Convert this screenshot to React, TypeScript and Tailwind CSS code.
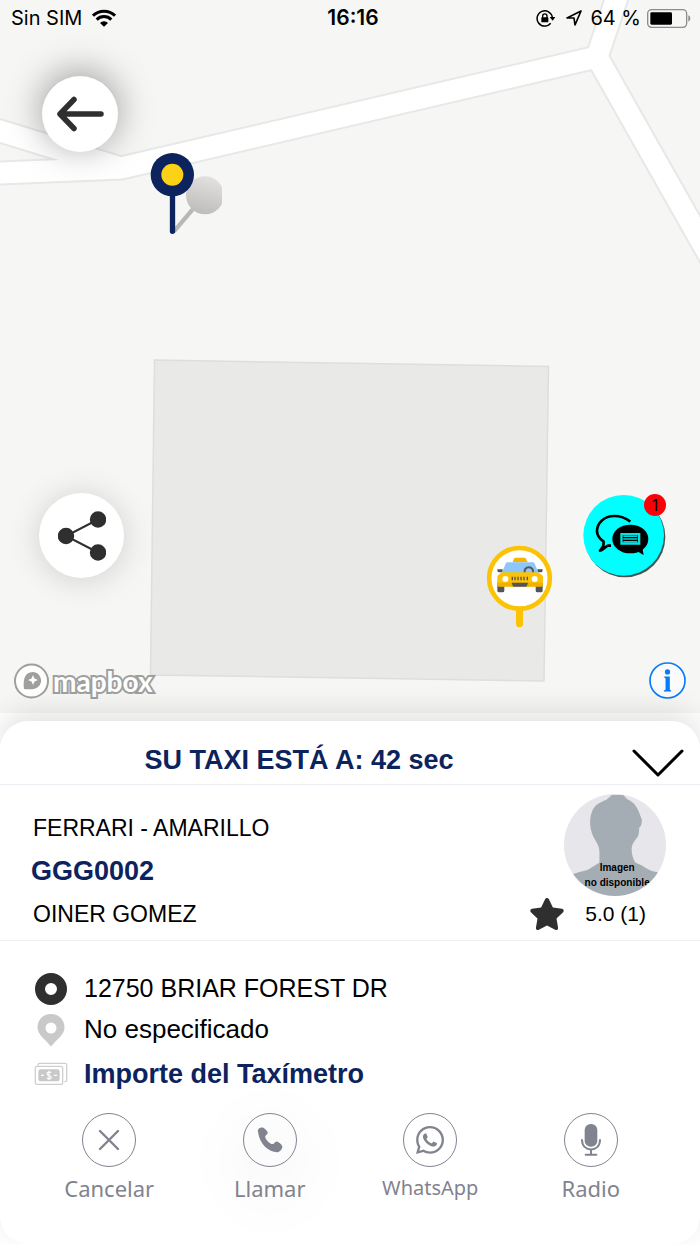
import { FaStar, FaWhatsapp } from "react-icons/fa";

const NAVY = "text-[#0c235e]";

interface Action { label: string; icon: React.ReactNode; labelClass: string; glow?: boolean }

const ACTIONS: Action[] = [
  { label: "Cancelar", icon: <CloseIcon />, labelClass: "text-[22px]" },
  { label: "Llamar", icon: <PhoneIcon />, labelClass: "text-[22px]", glow: true },
  { label: "WhatsApp", icon: <FaWhatsapp className="h-8 w-8" />, labelClass: "text-[20px]" },
  { label: "Radio", icon: <MicIcon />, labelClass: "text-[22px]" },
];

function CloseIcon() {
  return (
    <svg viewBox="0 0 24 24" className="h-6 w-6" fill="none" stroke="currentColor" strokeWidth="2.4" strokeLinecap="round">
      <path d="M3 3 21 21M21 3 3 21" />
    </svg>
  );
}

function PhoneIcon() {
  return (
    <svg viewBox="0 0 26 26" className="h-[26px] w-[26px]" fill="currentColor">
      <path d="M1 5C0 1.5 4 .2 5.500 .5c2 .3 5 3.800 5.300 5 .3 1.500-2.300 2.500-2.600 4-.2 1.600 1.200 3.500 2.700 5 1.500 1.500 3.300 2.800 4.900 2.600 1.500-.2 2-2.900 4-2.700 1.600.2 5 3 5.500 4.900.4 1.600-1.600 5.700-4.800 5.900C12.500 25.600 2.500 17.500 1 5Z" />
    </svg>
  );
}

function MicIcon() {
  return (
    <svg viewBox="0 0 60 96" className="h-8 w-5" fill="none" stroke="currentColor">
      <rect x="11" y="0" width="38" height="68" rx="18" fill="currentColor" stroke="none" />
      <path d="M3 48c0 38 54 38 54 0" strokeWidth="6" strokeLinecap="round" />
      <path d="M30 77v14M14 92h32" strokeWidth="6" strokeLinecap="round" />
    </svg>
  );
}

function MapCanvas() {
  const roads = ["M-10 173.500 121 168 597 57 700 239 760 345", "M-10 128 0 131 121 168", "M597 57 620 -12"];
  return (
    <svg viewBox="0 0 700 713" preserveAspectRatio="xMinYMin slice" className="absolute inset-0 h-full w-full" aria-hidden="true">
      <rect width="700" height="713" fill="#f6f6f4" />
      {roads.map((d) => <path key={d} d={d} fill="none" stroke="#e5e9e8" strokeWidth="25" />)}
      {roads.map((d) => <path key={d} d={d} fill="none" stroke="#fff" strokeWidth="21" />)}
      <path d="M154.500 360 548.500 366.500 544 681 150.500 675Z" fill="#e9e9e8" stroke="#dededd" strokeWidth="1.500" />
    </svg>
  );
}

function PickupPin() {
  return (
    <svg viewBox="0 0 216 246" className="absolute left-[150px] top-[152px] h-[82px] w-[72px]" role="img" aria-label="Recogida">
      <defs>
        <linearGradient id="pin-shade" x1="0.700" y1="0" x2="0.400" y2="1">
          <stop offset="0" stopColor="#e3e2e1" />
          <stop offset="1" stopColor="#bdbcbb" />
        </linearGradient>
      </defs>
      <path d="M72 238 128 172" stroke="#b9b8b7" strokeWidth="13" />
      <circle cx="165" cy="130" r="57" fill="url(#pin-shade)" />
      <path d="M67.500 120v118" stroke="#0c235e" strokeWidth="16" strokeLinecap="round" />
      <circle cx="67" cy="68" r="65" fill="#0c235e" />
      <circle cx="67" cy="68" r="33" fill="#fcd116" />
    </svg>
  );
}

function TaxiPin() {
  return (
    <svg viewBox="0 0 201 249" className="absolute left-[486px] top-[545px] h-[83px] w-[67px]" role="img" aria-label="Taxi">
      <path d="M100.500 190v46" stroke="#fcc205" strokeWidth="21" strokeLinecap="round" />
      <circle cx="100.500" cy="100" r="91" fill="#fff" stroke="#fcc205" strokeWidth="14" />
      <path d="M34 73h16v9H38c-3 0-4-4-4-9ZM170 73h-16v9h12c3 0 4-4 4-9Z" fill="#54555b" />
      <path d="M34 112h21v25q0 5-5 5H39q-5 0-5-5ZM149 112h21v25q0 5-5 5h-11q-5 0-5-5Z" fill="#54555b" />
      <path d="M80 52l4-11q1-3 5-3h26q4 0 5 3l5 11Z" fill="#f5b400" />
      <path d="M64 52h77q3 0 5 4l13 31H46l13-31q2-4 5-4Z" fill="#8cc6fb" />
      <path d="M116 83a13 13 0 1 1 25 0" fill="none" stroke="#54555b" strokeWidth="6" />
      <path d="M48 82h106l14 8q3 2 3 7v22q0 5-5 5H39q-5 0-5-5V97q0-5 3-7Z" fill="#fcc205" />
      <path d="M34 113h137v6q0 6-5 6H39q-5 0-5-6Z" fill="#f0b000" />
      <circle cx="58" cy="102" r="9" fill="#fff" />
      <circle cx="146" cy="102" r="9" fill="#fff" />
      <path d="M79 95v11M87 95v11M96 95v11M105 95v11M114 95v11M124 95v11" stroke="#54555b" strokeWidth="4" />
      <path d="M77 113h49l-3 9q-1 3-5 3H85q-4 0-5-3Z" fill="#54555b" />
    </svg>
  );
}

function StatusBar() {
  return (
    <header className="relative grid h-9 grid-cols-3 items-center pl-[11px] pr-[9px] font-['Inter',sans-serif] text-[20px] leading-6 text-black">
      <div className="flex items-center gap-2.5">
        <span>Sin SIM</span>
        <svg viewBox="0 0 72 52" className="h-[18px] w-6" fill="none" stroke="#000" strokeWidth="9">
          <path d="M3 19a47 47 0 0 1 66 0" />
          <path d="M14 31a31 31 0 0 1 44 0" />
          <path d="M24 41a17 17 0 0 1 24 0L36 52Z" fill="#000" stroke="none" />
        </svg>
      </div>
      <span className="pl-1 text-center text-[21px] font-semibold">16:16</span>
      <div className="flex items-center justify-end gap-1.5">
        <svg viewBox="0 0 60 54" className="mr-1 h-[18px] w-5" fill="none" stroke="#000" strokeWidth="4.500">
          <path d="M49 25A23 23 0 1 0 44 43" />
          <path d="M41 24h17l-8 11Z" fill="#000" stroke="none" />
          <rect x="16" y="25" width="21" height="15" rx="2" fill="#000" stroke="none" />
          <path d="M20 27v-6a6.500 6.500 0 0 1 13 0v6" strokeWidth="4" />
        </svg>
        <svg viewBox="0 0 48 48" className="mr-0.5 h-4 w-4" fill="none" stroke="#000" strokeWidth="5" strokeLinejoin="round">
          <path d="M45 3 3 24h21l3 21Z" />
        </svg>
        <span className="whitespace-nowrap">64 %</span>
        <svg viewBox="0 0 132 57" className="h-[19px] w-11" role="img" aria-label="Batería">
          <rect x="2" y="2" width="117" height="53" rx="12" fill="none" stroke="#8c8c8b" strokeWidth="4" />
          <rect x="10" y="10" width="65" height="37" rx="4" />
          <path d="M124 19c8 3 8 16 0 19Z" fill="#8c8c8b" />
        </svg>
      </div>
    </header>
  );
}

function MapboxLogo() {
  return (
    <a href="#mapbox" className="flex items-center gap-1">
      <svg viewBox="0 0 35 36" className="h-9 w-[35px]">
        <circle cx="17.500" cy="18" r="16.500" fill="#fff" stroke="#9f9f9e" strokeWidth="2" />
        <path d="M10 26c-1-8 0-17 9-17a8.500 8.500 0 0 1 5.500 14.500C21 27 15 26.500 10 26Z" fill="#9f9f9e" />
        <path d="m19 12 1.500 3.500L24 17l-3.500 1.500L19 22l-1.500-3.500L14 17l3.500-1.500Z" fill="#fff" />
      </svg>
      <span className="font-['Lato',sans-serif] text-[28px] font-bold leading-9 text-white [-webkit-text-stroke:4px_#9f9f9e] [paint-order:stroke_fill]">mapbox</span>
    </a>
  );
}

function MapView() {
  return (
    <section className="relative flex min-h-[640px] flex-1 flex-col overflow-hidden">
      <MapCanvas />
      <PickupPin />
      <TaxiPin />
      <StatusBar />
      <button aria-label="Volver" className="relative ml-[42px] mt-10 flex h-[76px] w-[76px] items-center justify-center rounded-full bg-white shadow-[0_-4px_36px_rgba(0,0,0,0.38)]">
        <svg viewBox="0 0 48 36" className="h-9 w-12" fill="none" stroke="#2f2f2f" strokeWidth="5.500" strokeLinecap="round" strokeLinejoin="round">
          <path d="M45 18H4M18 3.500 4 18l14 14.500" />
        </svg>
      </button>

      <div className="relative mb-[84px] mt-auto flex items-center justify-between pl-[39px] pr-[34px]">
        <button aria-label="Compartir" className="flex h-[85px] w-[85px] items-center justify-center rounded-full bg-white shadow-[0_2px_32px_rgba(0,0,0,0.16)]">
          <svg viewBox="0 0 48 50" className="h-[50px] w-12" fill="#2f2f2f" stroke="#2f2f2f" strokeWidth="2">
            <path d="M40 41.500 8 25 40 8.500" fill="none" />
            <circle cx="8" cy="25" r="7.200" />
            <circle cx="40" cy="8.500" r="7.200" />
            <circle cx="40" cy="41.500" r="7.200" />
          </svg>
        </button>
        <button aria-label="Mensajes" className="relative h-[84px] w-[84px]">
          <svg viewBox="0 0 252 252" className="h-full w-full">
            <circle cx="129" cy="129" r="121" fill="#4b5252" />
            <circle cx="125" cy="124" r="121" fill="#00ffff" />
            <path d="M145 83C128 70 112 66 97 66 67 66 45 86 45 112c0 12 7 22 20 31l-1 13-10 14c10-2 15-12 23-15h10" fill="none" stroke="#000" strokeWidth="8" strokeLinejoin="round" />
            <ellipse cx="145" cy="135" rx="54" ry="43" />
            <path d="M160 170c10 2 14 7 25 13l-5-26Z" />
            <path d="M115 117h60v35h-60Zm7 7v21h46v-21Z" fill="#00e5e5" />
            <path d="M124 127h42M124 135h42M124 143h42" stroke="#00d5d5" strokeWidth="4.500" />
          </svg>
          <span className="absolute right-0 top-0 flex h-[22px] w-[22px] items-center justify-center rounded-full bg-[#fb0207] font-['Inter',sans-serif] text-[16px] leading-none text-black">1</span>
        </button>
      </div>

      <div className="relative flex items-center justify-between px-3.5 pb-3.5">
        <MapboxLogo />
        <button aria-label="Información">
          <svg viewBox="0 0 112 112" className="h-[37px] w-[37px]" fill="#087bfb">
            <circle cx="56" cy="56" r="53" fill="#fff" fillOpacity="0.600" stroke="#087bfb" strokeWidth="5" />
            <circle cx="56" cy="30" r="8" />
            <path d="M46 44h17v40l4 2v3H45v-3l5-2V49l-4-2Z" />
          </svg>
        </button>
      </div>
    </section>
  );
}

function DriverPhoto() {
  return (
    <svg viewBox="0 0 305 305" className="h-[102px] w-[102px] rounded-full" role="img" aria-label="Imagen no disponible">
      <rect width="305" height="305" fill="#e6e6eb" />
      <path d="M143 3h34l12 13c26 10 33 32 44 61-1 11 0 17-8 23-1 15 0 22-7 31-10 14-18 21-15 44 2 16 7 28 14 32 22 6 30 22 63 27v71H26v-65c22-9 28-8 44-13 14-7 26-16 36-22v-30c0-13-3-21-12-36-17-28-21-62-9-90 9-20 26-25 42-32Z" fill="#a5adb4" />
      <g className="font-['Liberation_Sans',sans-serif] text-[30px] font-bold" textAnchor="middle">
        <text x="159" y="230">Imagen</text>
        <text x="159" y="275">no disponible</text>
      </g>
    </svg>
  );
}

function DriverInfo() {
  return (
    <section className="flex items-start justify-between border-b border-[#ededf3] pb-1 pl-[31px] pr-[34px]">
      <div className="mt-[22px] text-[23px] leading-[43px] text-black">
        <p className="pl-0.5">FERRARI - AMARILLO</p>
        <p className={`text-[27px] font-bold ${NAVY}`}>GGG0002</p>
        <p className="pl-0.5">OINER GOMEZ</p>
      </div>
      <div className="mt-[9px] flex flex-col items-end">
        <DriverPhoto />
        <div className="flex h-9 items-center gap-5 pr-5 text-[21px] text-black">
          <FaStar className="h-9 w-9 text-[#2f2f2f]" />
          <span>5.0 (1)</span>
        </div>
      </div>
    </section>
  );
}

function TripDetails() {
  return (
    <ul className="pl-[34px] pt-[27px] text-black">
      <li className="flex h-[41px] items-center gap-4">
        <svg viewBox="0 0 34 34" className="h-[34px] w-[34px]" fill="none">
          <circle cx="17" cy="17" r="11" stroke="#2f2f2f" strokeWidth="10" />
        </svg>
        <span className="text-[25px]">12750 BRIAR FOREST DR</span>
      </li>
      <li className="flex h-[41px] items-center gap-4">
        <svg viewBox="0 0 34 34" className="h-[34px] w-[34px]" fill="#c9c9c9">
          <path fillRule="evenodd" d="M17 1c8 0 13.500 6 13.500 13.500C30.500 22 22 27 17 33.500 12 27 3.500 22 3.500 14.500 3.500 7 9 1 17 1Zm0 8.500a5.500 5.500 0 1 0 0 11 5.500 5.500 0 0 0 0-11Z" />
        </svg>
        <span className="text-[26px]">No especificado</span>
      </li>
      <li className="flex h-12 items-center gap-4">
        <svg viewBox="0 0 102 70" className="h-6 w-[34px]" fill="none" stroke="#cfcfcf" strokeWidth="4">
          <path d="M12 10V7q0-4 4-4h77q5 0 5 5v46q0 4-4 4h-3" />
          <rect x="4" y="12" width="82" height="54" rx="5" />
          <rect x="13" y="21" width="64" height="36" rx="7" fill="#c9c9c9" stroke="none" />
          <path d="M51 32c-3-5-12-4-12 2 0 7 13 4 13 11 0 6-10 7-13 1M45 25v28" stroke="#fff" strokeWidth="3.500" />
          <path d="M21 39h9M60 39h9" stroke="#fff" />
        </svg>
        <span className={`text-[27px] font-bold ${NAVY}`}>Importe del Taxímetro</span>
      </li>
    </ul>
  );
}

export default function App() {
  return (
    <main className="flex min-h-screen flex-col bg-white font-['Liberation_Sans',sans-serif]">
      <MapView />
      <div className="relative mt-2 rounded-[28px] bg-white shadow-[0_-10px_28px_rgba(0,0,0,0.11)]">
        <div className="flex h-16 items-center border-b border-[#ededf3] pr-4">
          <h1 className={`flex-1 pr-[34px] pt-3.5 text-center text-[27px] font-bold leading-8 ${NAVY}`}>SU TAXI ESTÁ A: 42 sec</h1>
          <button aria-label="Ocultar detalles" className="pt-5">
            <svg viewBox="0 0 52 28" className="h-7 w-[52px]" fill="none" stroke="#000" strokeWidth="3" strokeLinecap="round" strokeLinejoin="round">
              <path d="M2 2 26 26 50 2" />
            </svg>
          </button>
        </div>

        <DriverInfo />
        <TripDetails />

        <nav className="grid grid-cols-4 px-[29px] pb-[42px] pt-[15px] font-['Noto_Sans',sans-serif] text-[#81838f]">
          {ACTIONS.map((a) => (
            <button key={a.label} className="relative flex flex-col items-center gap-[7px]">
              {a.glow && <span className="absolute top-0 h-24 w-20 rounded-full bg-black/2 blur-xl" />}
              <span className="relative flex h-[54px] w-[54px] items-center justify-center rounded-full border border-[#81838f]">{a.icon}</span>
              <span className={`relative leading-7 ${a.labelClass}`}>{a.label}</span>
            </button>
          ))}
        </nav>
      </div>
    </main>
  );
}
